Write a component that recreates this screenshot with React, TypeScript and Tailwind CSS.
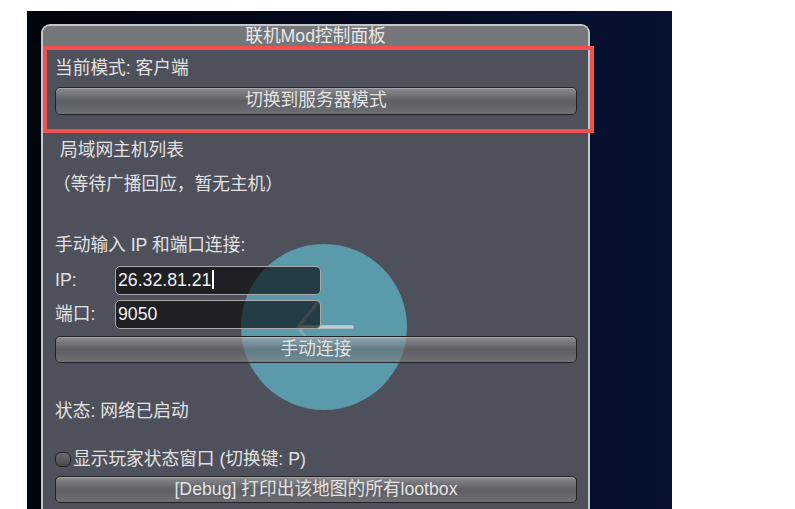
import React from "react";

const font = { fontFamily: '"Liberation Sans", "Noto Sans CJK SC", sans-serif' };

const btnClass =
  "h-[27px] w-full rounded-[5px] border border-[#232326] bg-gradient-to-b from-[rgba(175,175,175,0.62)] via-[rgba(105,105,108,0.62)] to-[rgba(128,128,132,0.62)] shadow-[inset_0_1px_0_rgba(255,255,255,0.25)] text-center text-[17.7px] leading-[25px] text-[#e2e2e2]";

const inputClass =
  "h-[29px] w-[206px] rounded-[5px] border border-[#a9a9ad] bg-[rgba(0,0,0,0.6)] px-[2px] text-[17.7px] leading-[27px] text-[#f2f2f2] outline-none";

function GameButton({ label, className = "" }: { label: string; className?: string }) {
  return (
    <div className={`${btnClass} ${className}`}>{label}</div>
  );
}

export default function App() {
  return (
    <div className="w-[795px] h-[509px] bg-white overflow-hidden pt-[11px] pl-[27px]" style={font}>
      <div className="w-[645px] h-[498px] bg-gradient-to-r from-[#02040c] via-[#040a1f] to-[#061233] pt-[13px] pl-[14px]">
        <div className="relative w-[549px] h-[500px] rounded-t-[9px] border-2 border-b-0 border-[#c8c8cc] bg-[#4e505b]">
          {/* title */}
          <div className="h-[20px] rounded-t-[7px] bg-[#76777b] text-center text-[17.7px] leading-[20px] text-[#e8e8e8]">
            联机Mod控制面板
          </div>

          {/* touch gesture circle */}
          <div className="absolute left-[198px] top-[218px] h-[166px] w-[166px] rounded-full bg-[#5a9aaa]">
            <svg width="166" height="166" viewBox="0 0 166 166" className="absolute left-0 top-0">
              <line x1="59" y1="83" x2="111" y2="83" stroke="rgba(215,215,215,0.85)" strokeWidth="3.5" strokeLinecap="round" />
              <line x1="77" y1="58" x2="57" y2="83" stroke="rgba(190,190,190,0.7)" strokeWidth="3" strokeLinecap="round" />
              <line x1="57" y1="83" x2="71" y2="101" stroke="rgba(190,190,190,0.35)" strokeWidth="3" strokeLinecap="round" />
            </svg>
          </div>

          <div className="relative z-10 pl-[12px] pr-[11px] text-[17.7px] text-[#e2e2e2]">
            <div className="mt-[12px] h-[20px] leading-[20px]">当前模式: 客户端</div>
            <GameButton label="切换到服务器模式" className="mt-[9px] h-[28px]" />

            <div className="mt-[25px] h-[20px] pl-[5px] leading-[20px]">局域网主机列表</div>
            <div className="mt-[14px] h-[20px] -ml-[2px] leading-[20px]">（等待广播回应，暂无主机）</div>

            <div className="mt-[41px] h-[20px] leading-[20px]">手动输入 IP 和端口连接:</div>
            <div className="mt-[11px] flex items-center">
              <span className="w-[60px]">IP:</span>
              <div className={inputClass}>
                26.32.81.21<span className="ml-[1px] inline-block h-[19px] w-[2px] translate-y-[3px] bg-white" />
              </div>
            </div>
            <div className="mt-[5px] flex items-center">
              <span className="w-[60px]">端口:</span>
              <div className={`${inputClass} h-[28px] leading-[26px]`}>9050</div>
            </div>
            <GameButton label="手动连接" className="mt-[7px]" />

            <div className="mt-[38px] h-[20px] leading-[20px]">状态: 网络已启动</div>

            <div className="mt-[28px] flex h-[20px] items-center leading-[20px]">
              <span className="mr-[2px] inline-block h-[15px] w-[16px] rounded-[6px] border border-[#222226] bg-gradient-to-b from-[#6c6c70] to-[#4a4a4e]" />
              显示玩家状态窗口 (切换键: P)
            </div>
            <GameButton label="[Debug] 打印出该地图的所有lootbox" className="mt-[7px]" />
          </div>

          {/* highlight annotation */}
          <div className="absolute left-0 top-[20px] z-20 h-[87px] w-[551px] border-4 border-[#f24f4f]" />
        </div>
      </div>
    </div>
  );
}
